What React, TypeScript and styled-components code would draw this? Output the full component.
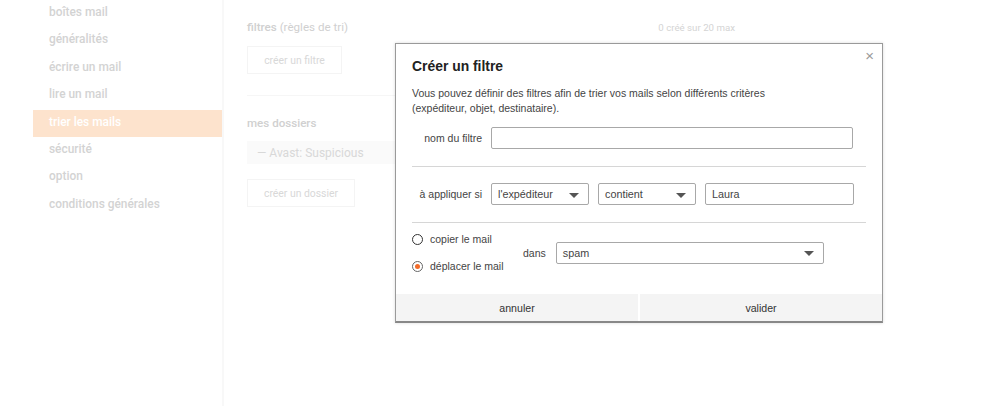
import React from "react";
import styled, { createGlobalStyle } from "styled-components";

const GlobalStyle = createGlobalStyle`
  html, body {
    margin: 0;
    padding: 0;
    background: #ffffff;
  }
  body {
    font-family: "Liberation Sans", Arial, sans-serif;
  }
`;

const Page = styled.div`
  display: flex;
  width: 999px;
  height: 406px;
  overflow: hidden;
  position: relative;
`;

const Sidebar = styled.nav`
  width: 189px;
  margin-left: 33px;
  border-right: 2px solid #f8f8f8;
  display: flex;
  flex-direction: column;
`;

const NavItem = styled.div<{ $active?: boolean }>`
  height: 27.4px;
  line-height: 25px;
  padding-left: 16px;
  font-family: Roboto, "Liberation Sans", sans-serif;
  font-size: 11.9px;
  font-weight: 500;
  color: ${(p) => (p.$active ? "#ffffff" : "#d3d3d3")};
  background: ${(p) => (p.$active ? "#fde3cd" : "transparent")};
`;

const Main = styled.main`
  flex: 1;
  padding: 14px 0 0 23px;
  font-family: Roboto, "Liberation Sans", sans-serif;
`;

const SectionHead = styled.div`
  display: flex;
  align-items: baseline;
  width: 488px;
  justify-content: space-between;
  margin-bottom: 12px;
`;

const SectionTitle = styled.h2`
  margin: 0;
  font-size: 11.6px;
  font-weight: 500;
  color: #d0d0d0;
  span {
    font-weight: 400;
  }
`;

const Counter = styled.span`
  font-size: 9.7px;
  color: #d4d4d4;
  margin-top: 8px;
`;

const GhostButton = styled.div<{ $w: number }>`
  width: ${(p) => p.$w}px;
  height: 28px;
  box-sizing: border-box;
  border: 1px solid #f4f4f4;
  display: flex;
  align-items: center;
  justify-content: center;
  font-size: 10.4px;
  color: #d8d8d8;
`;

const Divider = styled.div`
  height: 1px;
  background: #f6f6f6;
  width: 400px;
  margin: 21px 0 20px;
`;

const FolderBar = styled.div`
  width: 160px;
  height: 23px;
  background: #fafafa;
  margin: 11px 0 15px;
  display: flex;
  align-items: center;
  padding-left: 10px;
  font-size: 12px;
  color: #d8d8d8;
`;

const Modal = styled.div`
  position: absolute;
  left: 395px;
  top: 43px;
  width: 488px;
  height: 280px;
  box-sizing: border-box;
  background: #ffffff;
  border: 1px solid #9a9a9a;
  border-bottom: 2px solid #888888;
  box-shadow: 0 0 3px rgba(0, 0, 0, 0.15);
  display: flex;
  flex-direction: column;
  font-size: 10.5px;
  color: #333333;
`;

const Close = styled.span`
  position: absolute;
  right: 8px;
  top: 3px;
  font-size: 15px;
  color: #9a9a9a;
`;

const Body = styled.div`
  flex: 1;
  padding: 14px 16px 0 16px;
`;

const Title = styled.h3`
  margin: 0 0 12px;
  font-size: 13.9px;
  line-height: 16px;
  font-weight: 700;
  color: #222222;
`;

const Intro = styled.p`
  margin: 0 0 5px;
  line-height: 15px;
  color: #444444;
`;

const FormRow = styled.div`
  display: flex;
  align-items: center;
  gap: 9px;
  padding: 6px 13px 17px 0;
`;

const Label = styled.label`
  flex-shrink: 0;
  width: 70px;
  white-space: nowrap;
  text-align: right;
  color: #444444;
`;

const Line = styled.div`
  height: 1px;
  background: #d6d6d6;
  margin: 0 0 10px;
`;

const Field = styled.div<{ $w: number }>`
  flex-shrink: 0;
  width: ${(p) => p.$w}px;
  height: 22px;
  box-sizing: border-box;
  border: 1px solid #a8a8a8;
  border-radius: 2px;
  display: flex;
  align-items: center;
  justify-content: space-between;
  padding: 0 9px 0 6px;
  color: #444444;
  background: #fff;
  font-size: 10.8px;
`;

const Caret = styled.span`
  width: 0;
  height: 0;
  border-left: 5px solid transparent;
  border-right: 5px solid transparent;
  border-top: 5px solid #555555;
  margin-top: 2px;
`;

const ActionRow = styled.div`
  display: flex;
  align-items: center;
  margin-top: 2px;
`;

const Radios = styled.div`
  display: flex;
  flex-direction: column;
  gap: 15px;
  width: 111px;
`;

const RadioLine = styled.div`
  display: flex;
  align-items: center;
  gap: 7px;
  color: #444444;
`;

const RadioDot = styled.span<{ $on?: boolean }>`
  width: 11px;
  height: 11px;
  box-sizing: border-box;
  border-radius: 50%;
  border: 1.5px solid ${(p) => (p.$on ? "#666666" : "#333333")};
  display: flex;
  align-items: center;
  justify-content: center;
  &::after {
    content: "";
    width: 5px;
    height: 5px;
    border-radius: 50%;
    background: ${(p) => (p.$on ? "#f26b2a" : "transparent")};
  }
`;

const Dans = styled.span`
  margin-right: 10px;
  color: #444444;
`;

const Footer = styled.div`
  display: flex;
  height: 27px;
  gap: 2px;
`;

const FootButton = styled.button`
  flex: 1;
  border: none;
  background: #f4f4f4;
  font-family: "Liberation Sans", Arial, sans-serif;
  font-size: 10.6px;
  color: #333333;
  padding: 0;
`;

const navItems = [
  "boîtes mail",
  "généralités",
  "écrire un mail",
  "lire un mail",
  "trier les mails",
  "sécurité",
  "option",
  "conditions générales",
];

export default function App() {
  return (
    <>
      <GlobalStyle />
      <Page>
        <Sidebar>
          {navItems.map((item) => (
            <NavItem key={item} $active={item === "trier les mails"}>
              {item}
            </NavItem>
          ))}
        </Sidebar>
        <Main>
          <SectionHead>
            <SectionTitle>
              filtres <span>(règles de tri)</span>
            </SectionTitle>
            <Counter>0 créé sur 20 max</Counter>
          </SectionHead>
          <GhostButton $w={95}>créer un filtre</GhostButton>
          <Divider />
          <SectionTitle>mes dossiers</SectionTitle>
          <FolderBar>— Avast: Suspicious</FolderBar>
          <GhostButton $w={108}>créer un dossier</GhostButton>
        </Main>

        <Modal>
          <Close>×</Close>
          <Body>
            <Title>Créer un filtre</Title>
            <Intro>
              Vous pouvez définir des filtres afin de trier vos mails selon différents critères
              <br />
              (expéditeur, objet, destinataire).
            </Intro>
            <FormRow>
              <Label>nom du filtre</Label>
              <Field $w={362} />
            </FormRow>
            <Line />
            <FormRow>
              <Label>à appliquer si</Label>
              <Field $w={98}>
                l'expéditeur <Caret />
              </Field>
              <Field $w={98}>
                contient <Caret />
              </Field>
              <Field $w={149}>Laura</Field>
            </FormRow>
            <Line />
            <ActionRow>
              <Radios>
                <RadioLine>
                  <RadioDot />
                  copier le mail
                </RadioLine>
                <RadioLine>
                  <RadioDot $on />
                  déplacer le mail
                </RadioLine>
              </Radios>
              <Dans>dans</Dans>
              <Field $w={268}>
                spam <Caret />
              </Field>
            </ActionRow>
          </Body>
          <Footer>
            <FootButton>annuler</FootButton>
            <FootButton>valider</FootButton>
          </Footer>
        </Modal>
      </Page>
    </>
  );
}
